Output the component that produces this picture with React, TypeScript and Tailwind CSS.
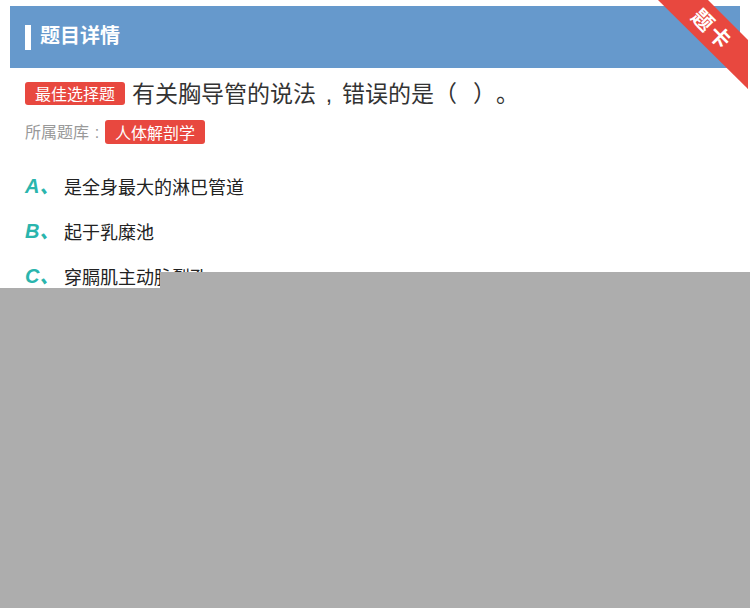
const options = [
  { key: 'A', text: '是全身最大的淋巴管道' },
  { key: 'B', text: '起于乳糜池' },
  { key: 'C', text: '穿膈肌主动脉裂孔' },
  { key: 'D', text: '注入右静脉角' },
];

export default function App() {
  return (
    <div className="relative w-[750px] h-[608px] bg-white overflow-hidden font-['Noto_Sans_CJK_SC',sans-serif]">
      {/* Header */}
      <div className="mx-[10px] mt-[6px] h-[62px] bg-[#6699cc] flex items-center pl-[15px]">
        <span className="w-[6px] h-[25px] bg-white mr-[9px]" />
        <span className="text-white font-bold text-[20px] leading-none mb-[5px]">题目详情</span>
      </div>

      {/* Ribbon */}
      <div className="absolute top-0 right-0 w-[100px] h-[100px]">
        <svg width="100" height="100" viewBox="650 0 100 100" className="absolute inset-0">
          <path d="M740 66 L748 66 L748 89 Q746 82 740 78 Z" fill="#b0302a" />
          <polygon points="658,0 708,0 748,40 748,89" fill="#e8483f" />
        </svg>
        <span className="absolute left-[63px] top-[29px] -translate-x-1/2 -translate-y-1/2 rotate-45 text-white font-bold text-[21px] leading-none tracking-[3px] whitespace-nowrap">
          题卡
        </span>
      </div>

      <div className="px-[25px]">
        {/* Question */}
        <div className="mt-[12px] flex items-center h-[26px]">
          <span className="bg-[#e8483f] text-white text-[16px] leading-[23px] h-[23px] px-[10px] rounded-[3px]">
            最佳选择题
          </span>
          <span className="ml-[7px] text-[23px] text-[#333] leading-none whitespace-nowrap [text-spacing-trim:space-all]">
            有关胸导管的说法
            <span className="inline-block w-[26px] text-center font-['Liberation_Sans',sans-serif]">,</span>
            错误的是（<span className="inline-block w-4" />）。
          </span>
        </div>

        <div className="mt-[14px] flex items-center h-[24px]">
          <span className="text-[16px] text-[#999]">
            所属题库
            <span className="inline-block w-4 text-center font-['Liberation_Sans',sans-serif]">:</span>
          </span>
          <span className="bg-[#e8483f] text-white text-[16px] leading-[24px] h-[24px] px-[10px] rounded-[3px]">
            人体解剖学
          </span>
        </div>

        {/* Options */}
        <div className="mt-[29px] flex flex-col gap-[19px]">
          {options.map((o) => (
            <div key={o.key} className="flex items-center h-[26px]">
              <span className="w-[39px] font-['Liberation_Sans','Noto_Sans_CJK_SC',sans-serif] text-[20px] font-bold italic text-[#2ab5ad] leading-none">
                {o.key}、
              </span>
              <span className="text-[18px] text-[#222] leading-none">{o.text}</span>
            </div>
          ))}
        </div>
      </div>

      {/* Mask over locked content */}
      <div className="absolute left-[160px] right-0 top-[272px] bottom-0 bg-[#adadad]" />
      <div className="absolute left-0 right-0 top-[288px] bottom-0 bg-[#adadad]" />
    </div>
  );
}
